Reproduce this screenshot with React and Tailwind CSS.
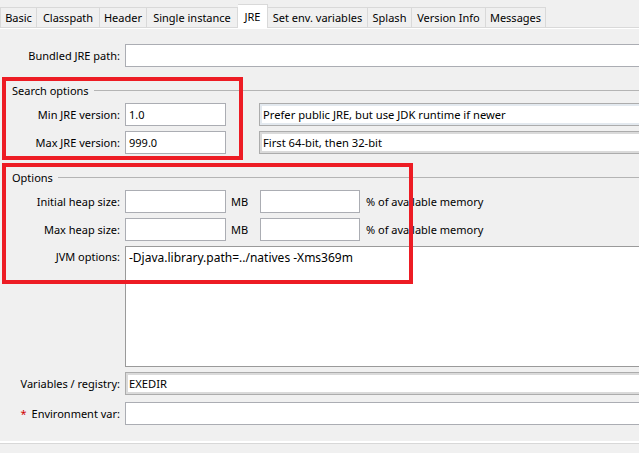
import React from "react";

const tabs = [
  { label: "Basic", w: "w-[37px]" },
  { label: "Classpath", w: "w-[63px]" },
  { label: "Header", w: "w-[47px]" },
  { label: "Single instance", w: "w-[91px]" },
  { label: "JRE", w: "w-[30px]", active: true },
  { label: "Set env. variables", w: "w-[100px]" },
  { label: "Splash", w: "w-[44px]" },
  { label: "Version Info", w: "w-[74px]" },
  { label: "Messages", w: "w-[60px]" },
];

function Label({ children, top }) {
  return (
    <div
      className={`w-[120px] shrink-0 text-right text-black ${top ? "self-start pt-[3px]" : ""}`}
    >
      {children}
    </div>
  );
}

function Field({ value, className = "" }) {
  return (
    <div
      className={`flex h-[23px] items-center border border-[#abadb3] bg-white px-[3px] text-black ${className}`}
    >
      {value}
    </div>
  );
}

function Combo({ value, band = "bg-[#e3e9ef]", className = "" }) {
  return (
    <div className={`h-[23px] border border-[#acacac] p-[2px] ${band} ${className}`}>
      <div className="flex h-full items-center bg-white px-[1px] text-[11.2px] text-black">{value}</div>
    </div>
  );
}

function GroupTitle({ children }) {
  return (
    <div className="flex h-[14px] items-center pl-[12px]">
      <span className="text-black">{children}</span>
      <div className="ml-[5px] h-px flex-1 bg-[#b4b4b4]" />
    </div>
  );
}

export default function App() {
  return (
    <div className="relative h-[453px] w-[639px] overflow-hidden bg-[#f0f0f0] font-['Noto_Sans',sans-serif] text-[11px] leading-[15px]">
      <div className="w-[680px]">
        {/* tab strip */}
        <div className="flex h-[28px] items-end border-b border-[#d9d9d9]">
          {tabs.map((t, i) => (
            <div
              key={t.label}
              className={`${t.w} flex shrink-0 items-center justify-center border-t border-r border-[#d9d9d9] ${
                i === 0 ? "border-l" : ""
              } ${t.active ? "relative z-10 -mb-px h-[24px] bg-white" : "h-[20px] bg-[#f0f0f0]"} text-black`}
            >
              {t.label}
            </div>
          ))}
        </div>
        <div className="h-px bg-white" />

        {/* body */}
        <div className="flex flex-col">
          <div className="mt-[15px] flex items-center">
            <Label>Bundled JRE path:</Label>
            <Field value="" className="ml-[5px] flex-1" />
          </div>

          <div className="mt-[16px]">
            <GroupTitle>Search options</GroupTitle>
          </div>
          <div className="mt-[6px] flex items-center">
            <Label>Min JRE version:</Label>
            <Field value="1.0" className="ml-[5px] w-[101px]" />
            <Combo value="Prefer public JRE, but use JDK runtime if newer" className="ml-[33px] flex-1" />
          </div>
          <div className="mt-[5px] flex items-center">
            <Label>Max JRE version:</Label>
            <Field value="999.0" className="ml-[5px] w-[101px]" />
            <Combo value="First 64-bit, then 32-bit" band="bg-[#dadada]" className="ml-[33px] flex-1" />
          </div>

          <div className="mt-[16px]">
            <GroupTitle>Options</GroupTitle>
          </div>
          <div className="mt-[6px] flex items-center">
            <Label>Initial heap size:</Label>
            <Field value="" className="ml-[5px] w-[101px]" />
            <span className="w-[34px] shrink-0 pl-[5px] text-black">MB</span>
            <Field value="" className="w-[100px]" />
            <span className="ml-[6px] text-black">% of available memory</span>
          </div>
          <div className="mt-[5px] flex items-center">
            <Label>Max heap size:</Label>
            <Field value="" className="ml-[5px] w-[101px]" />
            <span className="w-[34px] shrink-0 pl-[5px] text-black">MB</span>
            <Field value="" className="w-[100px]" />
            <span className="ml-[6px] text-black">% of available memory</span>
          </div>
          <div className="mt-[5px] flex">
            <Label top>JVM options:</Label>
            <div className="ml-[5px] h-[121px] flex-1 border border-[#9a9a9a] bg-white px-[3px] pt-[3px] text-[12px] leading-[16px] text-black">
              -Djava.library.path=../natives -Xms369m
            </div>
          </div>

          <div className="mt-[5px] flex items-center">
            <Label>Variables / registry:</Label>
            <Combo value="EXEDIR" band="bg-[#dadada]" className="ml-[5px] flex-1" />
          </div>
          <div className="mt-[7px] flex items-center">
            <Label>
              <span className="mr-[5px] text-[#d00000]">*</span>Environment var:
            </Label>
            <Field value="" className="ml-[5px] flex-1" />
          </div>

          <div className="mt-[16px] h-[2px] bg-white" />
          <div className="h-px bg-[#d8d8d8]" />
        </div>
      </div>

      {/* red annotation boxes */}
      <div className="pointer-events-none absolute left-[2px] top-[77px] h-[83px] w-[241px] border-4 border-[#ed1c24]" />
      <div className="pointer-events-none absolute left-[2px] top-[163px] h-[121px] w-[411px] border-4 border-[#ed1c24]" />
    </div>
  );
}
